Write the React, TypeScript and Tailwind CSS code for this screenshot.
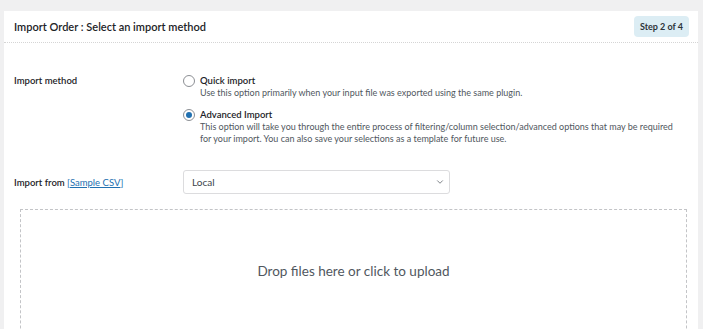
import { ChevronDown } from "lucide-react";

function Radio({ checked }: { checked?: boolean }) {
  return (
    <span className="mt-[1px] flex h-[12px] w-[12px] shrink-0 items-center justify-center rounded-full border border-[#8c8f94] bg-white">
      {checked && <span className="h-[6px] w-[6px] rounded-full bg-[#2271b1]" />}
    </span>
  );
}

export default function App() {
  return (
    <div
      className="h-[329px] w-[703px] overflow-hidden bg-[#f0f0f1] pl-[4px] pr-[5px] pt-[11px] text-[#1d2327]"
      style={{ fontFamily: 'Lato, "Noto Sans", sans-serif' }}
    >
      <div className="h-full bg-white">
        {/* Header */}
        <div className="flex h-[32px] items-center justify-between border-b border-dotted border-[#d5d5d5] pl-[10px] pr-[9px]">
          <h2 className="text-[11px] font-semibold leading-none text-[#1d2327]">
            Import Order : Select an import method
          </h2>
          <span className="rounded-[4px] bg-[#dcedf4] px-[6px] py-[6px] text-[9px] font-bold leading-none text-[#2c3338]">
            Step 2 of 4
          </span>
        </div>

        {/* Body */}
        <div className="pl-[10px] pr-[12px] pt-[31px]">
          <div className="flex">
            <div className="w-[169px] shrink-0 text-[9.5px] font-semibold leading-[13px]">Import method</div>
            <div className="flex flex-col gap-[9px]">
              <label className="flex gap-[5px]">
                <Radio />
                <div>
                  <div className="text-[9.5px] font-semibold leading-[13px]">Quick import</div>
                  <p className="text-[9px] leading-[12px] text-[#50575e]">
                    Use this option primarily when your input file was exported using the same plugin.
                  </p>
                </div>
              </label>
              <label className="flex gap-[5px]">
                <Radio checked />
                <div>
                  <div className="text-[9.5px] font-semibold leading-[13px]">Advanced Import</div>
                  <p className="text-[9px] leading-[12px] text-[#50575e]">
                    This option will take you through the entire process of filtering/column selection/advanced options that may be required for your import. You can also save your selections as a template for future use.
                  </p>
                </div>
              </label>
            </div>
          </div>

          <div className="mt-[25px] flex items-center">
            <div className="w-[169px] shrink-0 text-[9.5px] font-semibold leading-[13px]">
              Import from{" "}
              <span className="font-normal text-[#2271b1]">
                [<span className="underline">Sample CSV</span>]
              </span>
            </div>
            <div className="flex h-[24px] w-[267px] items-center justify-between rounded-[3px] border border-[#dcdcde] pl-[8px] pr-[4px] text-[10px] text-[#3c434a]">
              <span>Local</span>
              <ChevronDown size={10} strokeWidth={1.75} className="text-[#50575e]" />
            </div>
          </div>

          <div className="mt-[15px] ml-[6px] flex h-[160px] w-[667px] items-start justify-center border border-dashed border-[#c3c4c7] pt-[51px]">
            <span className="text-[13.5px] text-[#50575e]">Drop files here or click to upload</span>
          </div>
        </div>
      </div>
    </div>
  );
}
